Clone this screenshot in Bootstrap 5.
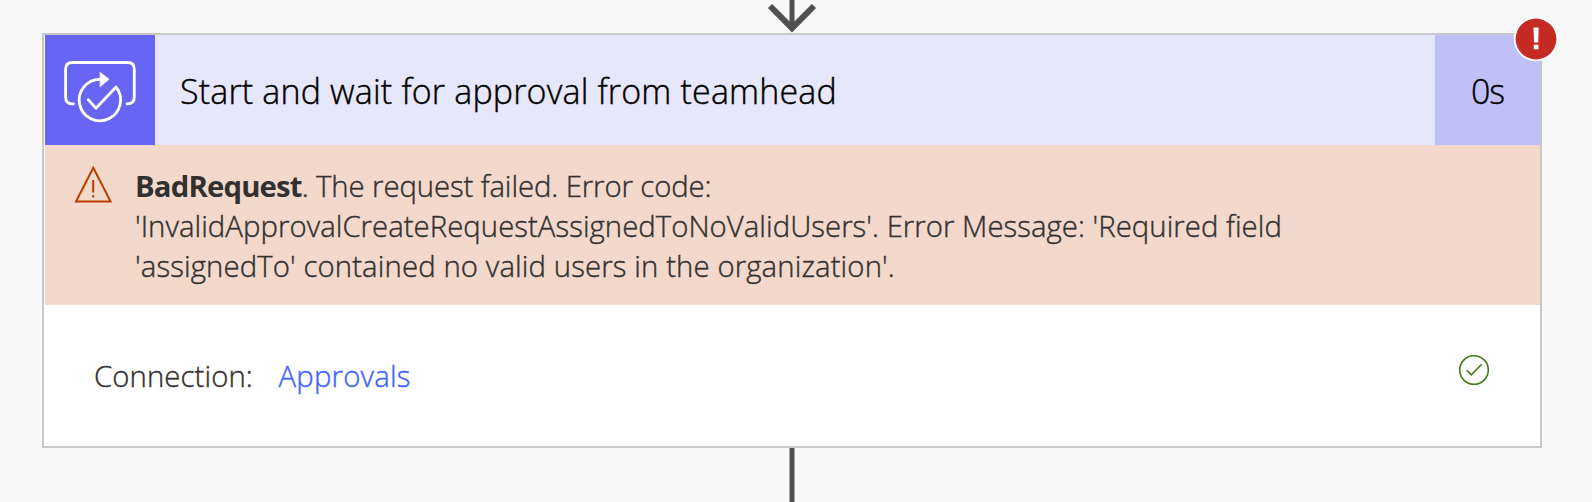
<!DOCTYPE html>
<html lang="en">
<head>
<meta charset="utf-8">
<meta name="viewport" content="width=device-width, initial-scale=1">
<title>Start and wait for approval</title>
<link href="https://cdn.jsdelivr.net/npm/bootstrap@5.3.0/dist/css/bootstrap.min.css" rel="stylesheet">
<style>
body{background:#f8f8f8;font-family:"Open Sans","Noto Sans",sans-serif;font-weight:300;color:#323130;font-size:29.3px;line-height:40px;height:502px;-webkit-text-stroke:.4px currentColor}
b{font-weight:700;letter-spacing:-.83px;-webkit-text-stroke:0}
.flow-in,.flow-out{padding-left:766px;line-height:0}
.flow-in{height:33px}
.flow-out{height:54px}
.action{width:1500px;height:415px;margin-left:42px;border:2px solid #c8c8c8;padding-left:1px}
.action-head{height:110px;background:#e7e7fb;color:#000;font-size:34px}
.action-name{padding:2px 0 0 25px;letter-spacing:.16px}
.action-icon{width:110px;background:#6865f4}
.action-time{width:105px;padding-top:2px;background:#c0c0f8;letter-spacing:-1.2px}
.action-error{height:160px;background:#f3d9cc;padding:21px 0 0 29px}
.action-error svg{margin-right:22px}
.err-lead{letter-spacing:-.09px}
.err-code{letter-spacing:.047px}
.err-tail{letter-spacing:.12px}
.action-conn{padding:51px 50px 0 49px}
.action-conn svg{margin-top:-2px}
.conn-link{color:#4262ff;margin-left:25.5px;letter-spacing:.22px}
.conn-label{letter-spacing:.1px}
.fail{right:-19.3px;top:-19.4px}
</style>
</head>
<body class="overflow-hidden">
<div class="flow-in"><svg width="52" height="33" fill="none" stroke="#505050"><path d="M26 0V28" stroke-width="5"/><path d="M4 6L26 28.200L48 6" stroke-width="6"/></svg></div>
<main class="action bg-white position-relative">
<header class="action-head d-flex align-items-stretch">
<div class="action-icon"><svg class="d-block" width="110" height="110" viewBox="0 0 110 110" fill="none" stroke="#fff" stroke-width="2.800" stroke-linecap="round" stroke-linejoin="round"><path d="M28.500 68.800H27Q20.600 68.800 20.600 62V34Q20.600 27.500 27.500 27.500H82.500Q89.300 27.500 89.300 34V62Q89.300 68.800 82.500 68.800H82"/><path d="M55 44.300A20.700 20.700 0 1 0 71 52L51 73.200L43.300 64.700"/><path d="M55.200 37.200L64.200 44.300L55.200 51.800Z" fill="#fff" stroke-width=".5"/></svg></div>
<div class="action-name flex-grow-1 d-flex align-items-center">Start and wait for approval from teamhead</div>
<div class="action-time d-flex align-items-center justify-content-center">0s</div>
</header>
<section class="action-error d-flex">
<svg class="flex-shrink-0" width="39" height="38" fill="none" stroke="#ba3d00" stroke-width="2"><path d="M19.300 1.800L2 35.500H36.600Z"/><path d="M19.200 14V26.500M19.200 29V31.500"/></svg>
<div><b>BadRequest</b><span class="err-lead">. The request failed. Error code:</span><br><span class="err-code">'InvalidApprovalCreateRequestAssignedToNoValidUsers'. Error Message: 'Required field</span><br><span class="err-tail">'assignedTo' contained no valid users in the organization'.</span></div>
</section>
<section class="action-conn d-flex"><span class="conn-label">Connection:</span><a class="conn-link text-decoration-none">Approvals</a>
<svg class="ms-auto" width="32" height="32" fill="none" stroke="#457b18" stroke-width="1.600"><circle cx="16" cy="16" r="14.300"/><path d="M8.700 16.300L13.300 20.900L23.700 10.300"/></svg></section>
<svg class="fail position-absolute" width="46" height="46"><circle cx="23" cy="23" r="22.300" fill="#fff"/><circle cx="23" cy="23" r="20.400" fill="#c62a24"/><path d="M20.500 11.500H25.700L25.200 26.500H21ZM20.700 28.700H25.500V33.300H20.700Z" fill="#fff"/></svg>
</main>
<div class="flow-out"><svg width="52" height="54"><path d="M26 0V54" stroke="#505050" stroke-width="5"/></svg></div>
<script src="https://cdn.jsdelivr.net/npm/bootstrap@5.3.0/dist/js/bootstrap.bundle.min.js"></script>
</body>
</html>
